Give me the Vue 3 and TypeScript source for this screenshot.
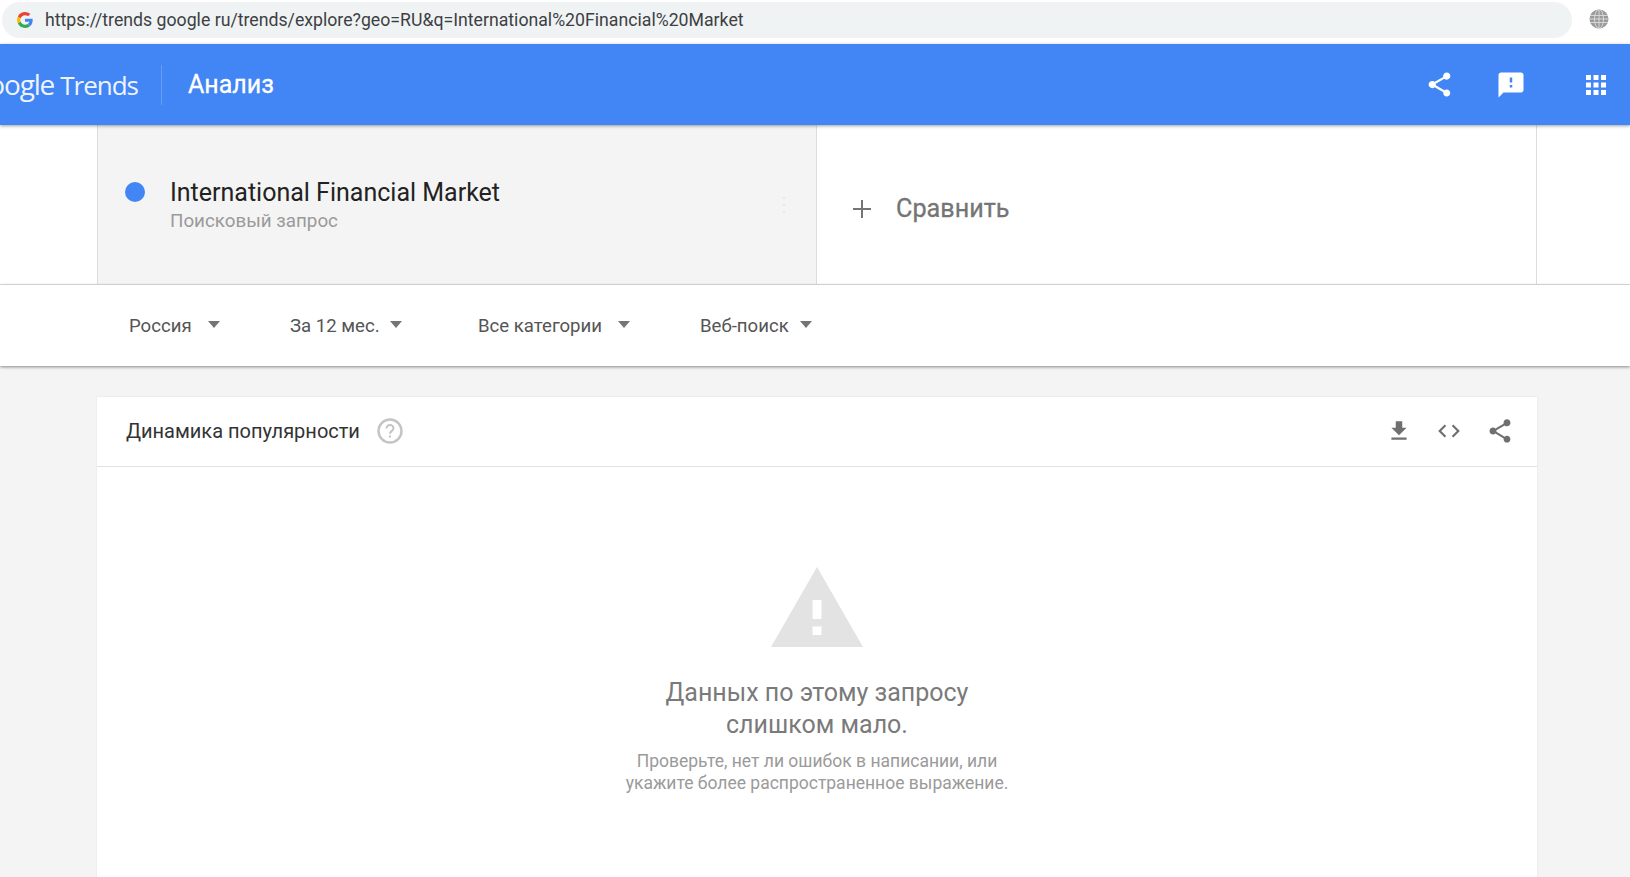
<script setup lang="ts">
const filters: { label: string; width: string; gap: string }[] = [
  { label: 'Россия', width: '161px', gap: '16px' },
  { label: 'За 12 мес.', width: '188px', gap: '10px' },
  { label: 'Все категории', width: '222px', gap: '16px' },
  { label: 'Веб-поиск', width: '130px', gap: '11px' },
]
</script>

<template>
  <div class="page">
    <div class="browser">
      <div class="address">
        <svg class="g-icon" viewBox="0 0 48 48" width="16" height="16">
          <path fill="#EA4335" d="M24 9.5c3.5 0 6.7 1.2 9.2 3.6l6.9-6.9C35.9 2.4 30.5 0 24 0 14.6 0 6.5 5.4 2.6 13.2l8 6.2C12.5 13.7 17.800 9.5 24 9.500z"/>
          <path fill="#4285F4" d="M47 24.500c0-1.600-.1-3.100-.4-4.500H24v9h12.900c-.6 3-2.200 5.500-4.700 7.200l7.700 6C44.400 38 47 31.800 47 24.500z"/>
          <path fill="#FBBC05" d="M10.600 28.600c-.5-1.400-.8-3-.8-4.600s.3-3.200.8-4.600l-8-6.200C.9 16.500 0 20.100 0 24s.9 7.500 2.600 10.800l8-6.200z"/>
          <path fill="#34A853" d="M24 48c6.500 0 11.900-2.100 15.900-5.800l-7.700-6c-2.100 1.400-4.900 2.300-8.200 2.300-6.200 0-11.500-4.200-13.400-9.900l-8 6.200C6.500 42.600 14.600 48 24 48z"/>
        </svg>
        <span class="url">https://trends google ru/trends/explore?geo=RU&amp;q=International%20Financial%20Market</span>
      </div>
      <svg class="globe" viewBox="0 0 20 20" width="20" height="20">
        <circle cx="10" cy="10" r="9.500" fill="#9a9a9a"/>
        <g fill="none" stroke="#d8d8d8" stroke-width="1">
          <ellipse cx="10" cy="10" rx="4.500" ry="9.500"/>
          <path d="M10 .5v19M1 6.500h18M.5 10h19M1 13.500h18"/>
        </g>
      </svg>
    </div>

    <header class="topbar">
      <div class="logo-clip"><span class="logo"><span class="logo-g">Google</span> <span class="logo-t">Trends</span></span></div>
      <div class="divider"></div>
      <div class="title">Анализ</div>
      <div class="top-actions">
        <svg class="top-share" viewBox="0 0 24 24" width="29" height="29"><path fill="#fff" d="M18 16.080c-.76 0-1.440.3-1.960.77L8.910 12.700c.05-.23.090-.460.090-.7s-.040-.470-.090-.7l7.050-4.110c.54.500 1.250.810 2.040.810 1.660 0 3-1.340 3-3s-1.340-3-3-3-3 1.340-3 3c0 .240.040.470.090.7L8.040 9.810C7.500 9.310 6.790 9 6 9c-1.660 0-3 1.340-3 3s1.340 3 3 3c.790 0 1.500-.310 2.040-.810l7.120 4.160c-.050.210-.080.430-.080.650 0 1.610 1.310 2.920 2.920 2.920s2.920-1.310 2.920-2.920-1.310-2.920-2.920-2.920z"/></svg>
        <svg class="top-feedback" viewBox="0 0 24 24" width="30" height="30"><path fill="#fff" d="M20 2H4c-1.100 0-2 .9-2 2v18l4-4h14c1.100 0 2-.9 2-2V4c0-1.100-.9-2-2-2zm-7 12h-2v-2h2v2zm0-4h-2V6h2v4z"/></svg>
        <svg class="top-apps" viewBox="0 0 24 24" width="30" height="30"><path fill="#fff" d="M4 8h4V4H4v4zm6 12h4v-4h-4v4zm-6 0h4v-4H4v4zm0-6h4v-4H4v4zm6 0h4v-4h-4v4zm6-10v4h4V4h-4zm-6 4h4V4h-4v4zm6 6h4v-4h-4v4zm0 6h4v-4h-4v4z"/></svg>
      </div>
    </header>

    <section class="terms">
      <div class="term">
        <span class="dot"></span>
        <div class="term-text">
          <div class="term-name">International Financial Market</div>
          <div class="term-type">Поисковый запрос</div>
        </div>
        <svg class="more" viewBox="0 0 4 20" width="4" height="20"><g fill="#e9e9e9"><circle cx="2" cy="3" r="1.300"/><circle cx="2" cy="10" r="1.300"/><circle cx="2" cy="17" r="1.300"/></g></svg>
      </div>
      <div class="compare">
        <svg viewBox="0 0 18 18" width="18" height="18"><path fill="#757575" d="M8 0h2v8h8v2h-8v8H8v-8H0V8h8z"/></svg>
        <span class="compare-label">Сравнить</span>
      </div>
    </section>

    <nav class="filters">
      <div v-for="f in filters" :key="f.label" class="filter" :style="{ width: f.width, gap: f.gap }">
        <span>{{ f.label }}</span>
        <i class="caret"></i>
      </div>
    </nav>

    <main class="body">
      <div class="card">
        <div class="card-head">
          <span class="card-title">Динамика популярности</span>
          <svg class="help" viewBox="0 0 26 26" width="26" height="26">
            <circle cx="13" cy="13" r="11.500" fill="none" stroke="#c4c4c4" stroke-width="2.400"/>
            <path d="M9.500 10.500c0-2 1.600-3.500 3.500-3.500s3.500 1.400 3.500 3.200c0 2.600-3.500 2.800-3.500 5.600" fill="none" stroke="#c4c4c4" stroke-width="2"/>
            <rect x="12" y="17.500" width="2" height="2" fill="#c4c4c4"/>
          </svg>
          <div class="card-actions">
            <svg viewBox="0 0 24 24" width="26" height="26"><path fill="#6f6f6f" d="M19 9h-4V3H9v6H5l7 7 7-7zM5 18v2h14v-2H5z"/></svg>
            <svg viewBox="0 0 24 24" width="26" height="26"><path fill="#6f6f6f" d="M9.400 16.600 4.800 12l4.600-4.600L8 6l-6 6 6 6 1.400-1.400zm5.200 0 4.600-4.600-4.600-4.600L16 6l6 6-6 6-1.400-1.400z"/></svg>
            <svg viewBox="0 0 24 24" width="28" height="28"><path fill="#6f6f6f" d="M18 16.080c-.76 0-1.440.3-1.960.77L8.910 12.700c.05-.23.090-.460.090-.7s-.040-.470-.090-.7l7.050-4.110c.54.500 1.250.810 2.040.810 1.660 0 3-1.340 3-3s-1.340-3-3-3-3 1.340-3 3c0 .240.040.470.090.7L8.040 9.810C7.500 9.310 6.790 9 6 9c-1.660 0-3 1.340-3 3s1.340 3 3 3c.790 0 1.500-.310 2.040-.810l7.120 4.160c-.050.210-.080.430-.080.650 0 1.610 1.310 2.920 2.920 2.920s2.920-1.310 2.920-2.920-1.310-2.920-2.920-2.920z"/></svg>
          </div>
        </div>
        <div class="empty">
          <svg class="warn" viewBox="0 0 92 80" width="92" height="80">
            <path fill="#e3e3e3" fill-rule="evenodd" d="M46 0 92 80H0zM43 33c-1 0-1.500.5-1.500 1.500v16c0 1 .5 1.500 1.500 1.500h6c1 0 1.500-.5 1.500-1.500v-16c0-1-.5-1.500-1.500-1.500zM41.500 59.500v8.500h9v-8.500z"/>
          </svg>
          <h2 class="empty-title">Данных по этому запросу<br />слишком мало.</h2>
          <p class="empty-text">Проверьте, нет ли ошибок в написании, или<br />укажите более распространенное выражение.</p>
        </div>
      </div>
    </main>
  </div>
</template>

<style>
html, body { margin: 0; background: #fff; }
</style>

<style scoped>
.page {
  width: 1630px;
  height: 877px;
  overflow: hidden;
  display: flex;
  flex-direction: column;
  font-family: Roboto, "Liberation Sans", sans-serif;
  background: #f4f4f4;
}
.browser {
  height: 44px;
  flex: none;
  background: #fff;
  display: flex;
  align-items: flex-start;
  padding: 2px 0 0 2px;
  box-sizing: border-box;
}
.address {
  width: 1570px;
  height: 36px;
  border-radius: 18px;
  background: #f0f3f4;
  display: flex;
  align-items: center;
  padding-left: 15px;
  box-sizing: border-box;
}
.g-icon { flex: none; }
.url {
  margin-left: 12px;
  font-size: 17.700px;
  color: #3d4043;
  white-space: nowrap;
}
.globe { margin: 7px 0 0 17px; flex: none; }
.topbar {
  height: 81px;
  flex: none;
  background: #4285f4;
  box-shadow: 0 1px 3px rgba(60, 64, 67, 0.5);
  display: flex;
  align-items: center;
  position: relative;
  z-index: 2;
  color: #fff;
}
.logo-clip {
  width: 161px;
  height: 100%;
  overflow: hidden;
  position: relative;
  flex: none;
}
.logo {
  position: absolute;
  right: 23px;
  top: 21px;
  font-family: "Open Sans", sans-serif;
  white-space: nowrap;
  color: #eef4fe;
}
.logo-g { font-size: 28px; letter-spacing: -1.200px; margin-right: 2px; }
.logo-t { font-size: 26px; letter-spacing: -1px; }
.divider {
  width: 1px;
  height: 40px;
  background: rgba(255, 255, 255, 0.2);
  flex: none;
}
.title {
  margin-left: 26px;
  font-size: 25px;
  font-weight: 400;
  -webkit-text-stroke: 0.3px #fff;
}
.top-actions {
  margin-left: auto;
  display: flex;
  align-items: center;
  padding-right: 19px;
}
.top-share { margin-right: 42px; }
.top-feedback { margin-right: 55px; }
.terms {
  height: 160px;
  flex: none;
  background: #fff;
  border-bottom: 1px solid #e0e0e0;
  box-sizing: border-box;
  padding: 0 93px 0 97px;
  display: flex;
}
.term {
  width: 720px;
  box-sizing: border-box;
  background: #f4f4f4;
  border-left: 1px solid #dcdcdc;
  border-right: 1px solid #dcdcdc;
  display: flex;
  align-items: flex-start;
  position: relative;
  padding: 53px 0 0 27px;
}
.dot {
  width: 20px;
  height: 20px;
  border-radius: 50%;
  background: #4285f4;
  flex: none;
  margin-top: 4px;
}
.term-text { margin-left: 25px; }
.term-name {
  font-size: 25px;
  line-height: 29px;
  color: #222;
}
.term-type {
  font-size: 18.800px;
  line-height: 22px;
  margin-top: 3px;
  color: #9a9a9a;
}
.more { position: absolute; left: 684px; top: 70px; }
.compare {
  flex: 1;
  border-right: 1px solid #dcdcdc;
  display: flex;
  align-items: center;
  padding: 8px 0 0 36px;
  color: #757575;
  font-size: 25.200px;
  font-weight: 400;
  -webkit-text-stroke: 0.3px #757575;
}
.compare-label { margin-left: 25px; }
.filters {
  height: 81px;
  flex: none;
  background: #fff;
  box-shadow: 0 1px 3px rgba(0, 0, 0, 0.45);
  padding-left: 129px;
  display: flex;
  align-items: center;
  box-sizing: border-box;
  position: relative;
  z-index: 1;
  font-size: 18.600px;
  color: #555;
}
.filter { display: flex; align-items: center; flex: none; }
.caret {
  margin-top: -3px;
  width: 0;
  height: 0;
  border-left: 6.500px solid transparent;
  border-right: 6.500px solid transparent;
  border-top: 7px solid #757575;
}
.body {
  flex: 1;
  min-height: 0;
  padding: 31px 93px 0 97px;
}
.card {
  height: 100%;
  background: #fff;
  box-shadow: 0 0 2px rgba(0, 0, 0, 0.08);
  display: flex;
  flex-direction: column;
}
.card-head {
  height: 70px;
  flex: none;
  border-bottom: 1px solid #e2e2e2;
  box-sizing: border-box;
  display: flex;
  align-items: center;
  padding: 0 23px 2px 29px;
}
.card-title {
  font-size: 20px;
  color: #333;
}
.help { margin-left: 17px; }
.card-actions {
  margin-left: auto;
  display: flex;
  align-items: center;
  gap: 24px;
}
.empty {
  display: flex;
  flex-direction: column;
  align-items: center;
  padding-top: 100px;
  text-align: center;
}
.warn { display: block; }
.empty-title {
  margin: 30px 0 0;
  font-size: 25px;
  line-height: 32px;
  font-weight: 400;
  color: #7a7a7a;
}
.empty-text {
  margin: 9px 0 0;
  font-size: 17.500px;
  line-height: 22px;
  color: #9a9a9a;
}
</style>
